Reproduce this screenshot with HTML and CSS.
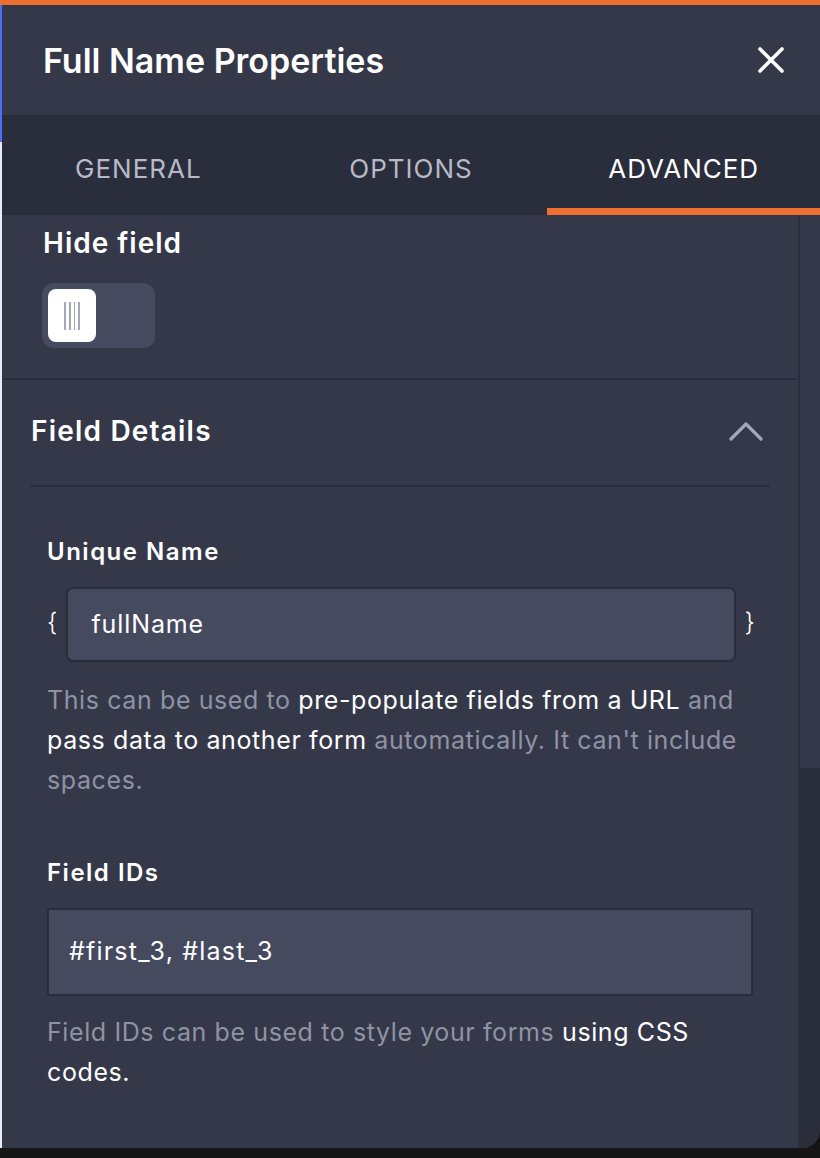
FILE: index.html
```html
<!DOCTYPE html>
<html lang="en">
<head>
<meta charset="utf-8">
<title>Full Name Properties</title>
<link rel="stylesheet" href="styles.css">
</head>
<body>
<div class="topbar"></div>
<div class="stage">
  <div class="edge"><div class="edge-blue"></div></div>
  <div class="panel">
    <header class="header">
      <h1 class="title">Full Name Properties</h1>
      <button class="close" aria-label="Close">
        <svg width="26" height="26" viewBox="0 0 26 26"><path d="M2 2 L24 24 M24 2 L2 24" stroke="#fff" stroke-width="3.6" stroke-linecap="round"/></svg>
      </button>
    </header>
    <nav class="tabs">
      <div class="tab">GENERAL</div>
      <div class="tab">OPTIONS</div>
      <div class="tab active">ADVANCED</div>
    </nav>
    <div class="body">
      <div class="content">
        <section class="hide">
          <div class="hide-title">Hide field</div>
          <div class="toggle">
            <div class="knob"><span></span><span></span><span></span><span></span></div>
          </div>
        </section>
        <section class="details">
          <div class="details-head">
            <div class="details-title">Field Details</div>
            <svg class="chev" width="34" height="20" viewBox="0 0 34 20"><path d="M2 18 L17 3 L32 18" fill="none" stroke="#a3a7b6" stroke-width="3.2" stroke-linecap="round" stroke-linejoin="round"/></svg>
          </div>
          <div class="details-body">
            <div class="label">Unique Name</div>
            <div class="uname-row">
              <span class="brace">{</span>
              <div class="uname-input">fullName</div>
              <span class="brace">}</span>
            </div>
            <p class="help">This can be used to <span class="hl">pre-populate fields from a URL</span> and <span class="hl">pass data to another form</span> automatically. It can't include spaces.</p>
            <div class="label label-ids">Field IDs</div>
            <div class="ids-input">#first_3, #last_3</div>
            <p class="help help-ids">Field IDs can be used to style your forms <span class="hl">using CSS codes.</span></p>
          </div>
        </section>
      </div>
      <div class="scroll"><div class="thumb"></div></div>
    </div>
  </div>
</div>
<div class="bottombar"></div>
</body>
</html>
```
FILE: styles.css
```css
html, body {
  margin: 0;
  padding: 0;
}
body {
  width: 820px;
  height: 1158px;
  overflow: hidden;
  background: #161616;
  font-family: "Inter", "Lato", "Noto Sans", sans-serif;
  color: #ffffff;
  display: flex;
  flex-direction: column;
}
.topbar {
  height: 5px;
  background: #ee7031;
  flex: none;
}
.stage {
  display: flex;
  height: 1143px;
  flex: none;
}
.edge {
  width: 2px;
  background: #e9ebf2;
  flex: none;
}
.edge-blue {
  height: 137px;
  background: #4f6ef7;
}
.panel {
  flex: 1;
  background: #343849;
  display: flex;
  flex-direction: column;
  border-bottom-right-radius: 18px;
  overflow: hidden;
}
.header {
  height: 110px;
  flex: none;
  display: flex;
  align-items: center;
  justify-content: space-between;
  padding: 0 36px 0 41px;
  background: #343849;
}
.title {
  margin: 0;
  font-size: 34px;
  font-weight: 600;
  letter-spacing: 0;
}
.close {
  background: none;
  border: 0;
  padding: 0;
  width: 26px;
  height: 26px;
  display: flex;
}
.tabs {
  height: 100px;
  flex: none;
  display: grid;
  grid-template-columns: 1fr 1fr 1fr;
  background: #2a2d3b;
}
.tab {
  display: flex;
  align-items: center;
  justify-content: center;
  font-size: 26px;
  color: #b7bac6;
  letter-spacing: 1px;
  border-bottom: 7px solid transparent;
  padding-top: 13px;
}
.tab.active {
  color: #ffffff;
  border-bottom-color: #ee7031;
}
.body {
  flex: 1;
  display: flex;
  min-height: 0;
}
.content {
  flex: 1;
  min-width: 0;
}
.scroll {
  width: 22px;
  flex: none;
  background: #2a2d3a;
}
.thumb {
  margin-left: 2px;
  height: 553px;
  background: #343849;
}
.hide {
  border-bottom: 2px solid #2a2d3a;
  padding: 13px 41px 0;
  box-sizing: border-box;
  height: 165px;
}
.hide-title {
  font-size: 28px;
  font-weight: 600;
  line-height: 30px;
  letter-spacing: 1px;
}
.toggle {
  margin-top: 25px;
  width: 113px;
  height: 65px;
  border-radius: 12px;
  background: #474b60;
  padding: 6px;
  box-sizing: border-box;
  margin-left: -1px;
}
.knob {
  width: 48px;
  height: 53px;
  border-radius: 8px;
  background: #ffffff;
  display: flex;
  justify-content: center;
  align-items: center;
  gap: 3px;
}
.knob span {
  width: 1.6px;
  height: 28px;
  background: #a5a8b8;
}
.details {
  padding: 0 28px;
}
.details-head {
  height: 107px;
  display: flex;
  align-items: center;
  justify-content: space-between;
  border-bottom: 2px solid #2a2d3a;
  padding: 0 7px 4px 1px;
  box-sizing: border-box;
}
.details-title {
  font-size: 28px;
  font-weight: 600;
  letter-spacing: 1.2px;
}
.details-body {
  padding: 50px 17px 0;
}
.label {
  font-size: 24px;
  font-weight: 600;
  line-height: 30px;
  letter-spacing: 1.5px;
}
.uname-row {
  margin-top: 20px;
  display: flex;
  align-items: center;
  gap: 9px;
  margin-right: -2px;
}
.brace {
  font-size: 25px;
  font-weight: 300;
  color: #ffffff;
  margin-top: -6px;
}
.uname-input {
  flex: 1;
  height: 75px;
  box-sizing: border-box;
  background: #464a5f;
  border: 2px solid #2a2d3a;
  border-radius: 7px;
  display: flex;
  align-items: center;
  padding-left: 23px;
  font-size: 25px;
  letter-spacing: 0.9px;
  padding-bottom: 2px;
}
.help {
  margin: 18px 0 0;
  font-size: 25px;
  line-height: 40px;
  letter-spacing: 0.6px;
  color: #8f93a4;
}
.help .hl {
  color: #ffffff;
}
.help.help-ids {
  margin-top: 16px;
}
.label-ids {
  margin-top: 58px;
}
.ids-input {
  margin-top: 20px;
  height: 88px;
  box-sizing: border-box;
  background: #464a5f;
  border: 2px solid #2a2d3a;
  display: flex;
  align-items: center;
  padding-left: 20px;
  font-size: 25px;
  letter-spacing: 1.2px;
  padding-bottom: 2px;
}
.bottombar {
  flex: 1;
  background: #161616;
}
```
